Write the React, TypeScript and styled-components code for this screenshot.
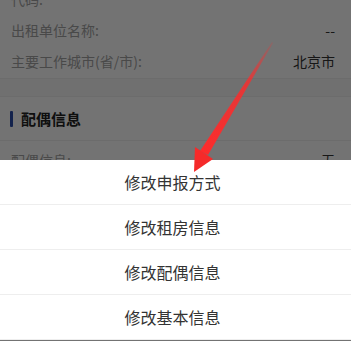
import React from "react";
import styled, { createGlobalStyle } from "styled-components";

const GlobalStyle = createGlobalStyle`
  html, body {
    margin: 0;
    padding: 0;
    background: #ffffff;
    overflow: hidden;
  }
  body {
    font-family: "Noto Sans CJK SC", "Noto Sans", sans-serif;
    -webkit-font-smoothing: antialiased;
  }
`;

const Page = styled.div`
  width: 351px;
  height: 341px;
  position: relative;
  overflow: hidden;
  background: #ffffff;
`;

const Content = styled.div`
  margin-top: -17px;
  display: flex;
  flex-direction: column;
`;

const InfoRow = styled.div`
  height: 31px;
  display: flex;
  align-items: center;
  justify-content: space-between;
  padding: 0 16px 0 11px;
  font-size: 14px;
`;

const Label = styled.span`
  color: #a3a3a3;
`;

const Value = styled.span`
  color: #333333;
`;

const SectionGap = styled.div`
  height: 17px;
  margin-top: 2px;
  background: #f9f9f9;
  border-top: 1px solid #f0f0f0;
  border-bottom: 1px solid #f0f0f0;
`;

const SectionHeader = styled.div`
  height: 43px;
  display: flex;
  align-items: center;
  gap: 8px;
  padding: 0 10px;
  font-size: 15px;
  font-weight: bold;
  color: #222222;
  border-bottom: 1px solid #f0f0f0;
`;

const HeaderBar = styled.span`
  width: 3px;
  height: 16px;
  border-radius: 1px;
  background: #2c4da8;
`;

const SubRow = styled(InfoRow)`
  margin-top: 3px;
`;

const Mask = styled.div`
  position: absolute;
  inset: 0;
  background: rgba(0, 0, 0, 0.55);
`;

const Sheet = styled.div`
  position: absolute;
  left: 0;
  right: 0;
  top: 160px;
  background: #ffffff;
  display: flex;
  flex-direction: column;
`;

const SheetItem = styled.div`
  height: 44px;
  display: flex;
  align-items: center;
  justify-content: center;
  padding-right: 6px;
  font-size: 16px;
  color: #333333;
  border-bottom: 1px solid #eeeeee;
`;

const ArrowLayer = styled.svg`
  position: absolute;
  left: 0;
  top: 0;
  pointer-events: none;
`;

const sheetItems = ["修改申报方式", "修改租房信息", "修改配偶信息", "修改基本信息"];

export default function App() {
  return (
    <>
      <GlobalStyle />
      <Page>
        <Content>
          <InfoRow>
            <Label>代码:</Label>
            <Value></Value>
          </InfoRow>
          <InfoRow>
            <Label>出租单位名称:</Label>
            <Value>--</Value>
          </InfoRow>
          <InfoRow>
            <Label>主要工作城市(省/市):</Label>
            <Value>北京市</Value>
          </InfoRow>
          <SectionGap />
          <SectionHeader>
            <HeaderBar />
            配偶信息
          </SectionHeader>
          <SubRow>
            <Label>配偶信息:</Label>
            <Value>无</Value>
          </SubRow>
        </Content>
        <Mask />
        <Sheet>
          {sheetItems.map((t) => (
            <SheetItem key={t}>{t}</SheetItem>
          ))}
        </Sheet>
        <ArrowLayer width="351" height="341" viewBox="0 0 351 341">
          <defs>
            <linearGradient id="fade" x1="272" y1="42" x2="200" y2="160" gradientUnits="userSpaceOnUse">
              <stop offset="0" stopColor="#ff2a2a" stopOpacity="0.15" />
              <stop offset="0.35" stopColor="#ff2a2a" stopOpacity="0.8" />
              <stop offset="1" stopColor="#ff2a2a" stopOpacity="1" />
            </linearGradient>
          </defs>
          <polygon points="272,42 273,43 208,155 200,151" fill="url(#fade)" />
          <polygon points="194,172 195,147 213,159" fill="#f52a2a" />
        </ArrowLayer>
      </Page>
    </>
  );
}
